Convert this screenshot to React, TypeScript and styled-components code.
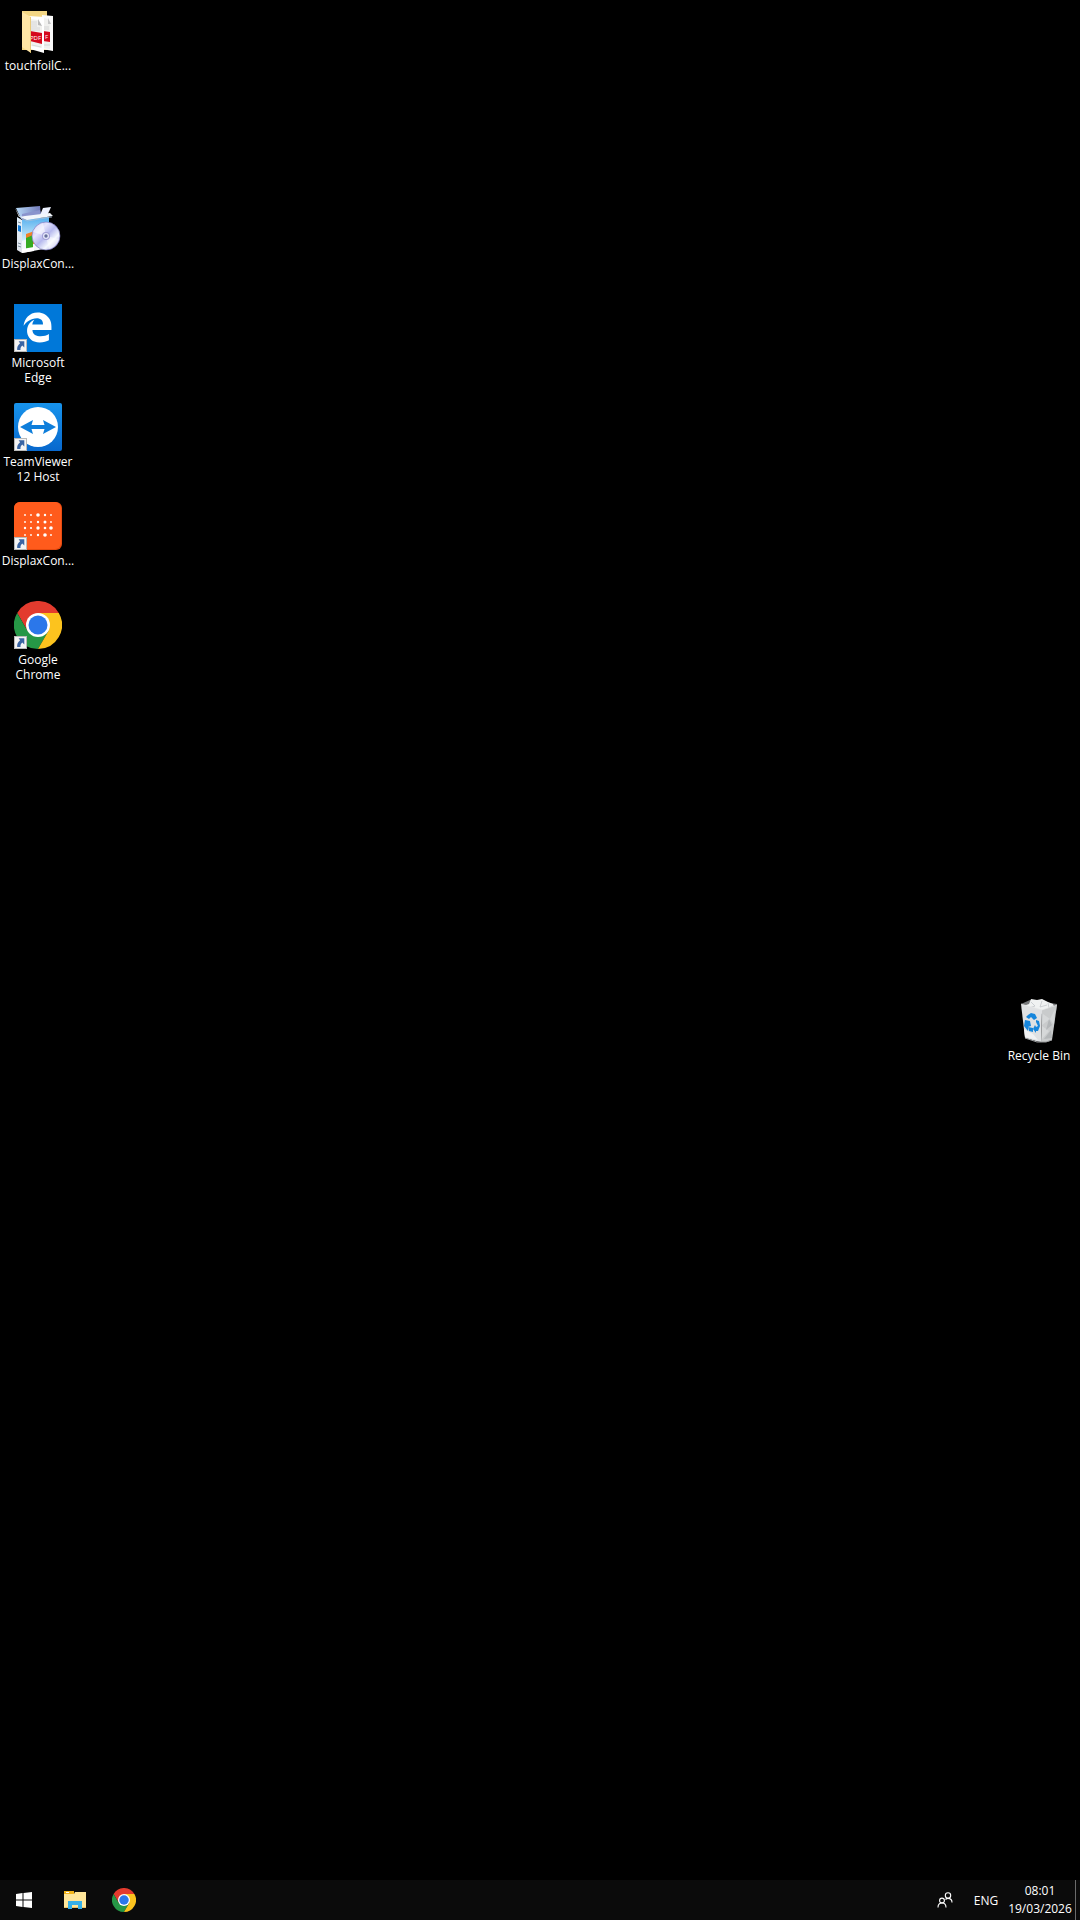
import React from "react"
import { FaEdgeLegacy } from "react-icons/fa"
import styled, { createGlobalStyle } from "styled-components"

const GlobalStyle = createGlobalStyle`
  body {
    margin: 0;
    background: #000;
    color: #fff;
    font-family: "Open Sans", "Noto Sans", sans-serif;
    font-size: 12px;
  }

  button {
    border: 0;
    padding: 0;
    background: none;
    color: inherit;
    font: inherit;
  }
`

const ShortcutArrow: React.FC = () => (
  <g>
    <rect x="0.5" y="35.5" width="12" height="12" fill="#f4f4f4" stroke="#b9b9b9" />
    <path d="M4.600 37.200h5.700v6.200l-2-1.900c-1.500 1.200-2 2.600-1.800 4.500H3.200c-.3-2.800.6-5 2.900-6.800z" fill="#3a64a3" />
  </g>
)

const PdfFolderIcon: React.FC = () => (
  <svg width="48" height="48" viewBox="0 0 48 48" fontSize="6" aria-hidden="true">
    <path d="M8 4h25v39H8z" fill="#f3d684" />
    <path d="M28 8l11 1v35l-11-2z" fill="#fafafa" />
    <path d="M30 11l4 1 2 5v25l-6-1z" fill="#f0f0ee" />
    <path d="M34 11l3 6h-3z" fill="#c4c4c4" />
    <path d="M30 20h5M30 22h5M30 38h6" stroke="#cfcfcf" strokeWidth="0.8" />
    <path d="M29 24l7 1v10l-7-1z" fill="#d5081d" />
    <text x="31" y="32" fill="#fff">
      F
    </text>
    <path d="M15 9l15 1v36l-14-4z" fill="#fff" />
    <path d="M16 12l8 1 4 6v22l-11-2z" fill="#f1f1ee" />
    <path d="M24 12l4 7-4-1z" fill="#b9b9b9" />
    <path d="M17 15h6M17 17h6M17 19h6M17 21h9M17 23h9M18 38l9 2" stroke="#d3d3d3" strokeWidth="0.8" />
    <path d="M16 24l12 2v11l-12-3z" fill="#d5081d" />
    <text x="16" y="33" fill="#fff">
      PDF
    </text>
    <path d="M8 5l9 5v36l-9-6z" fill="#ffe6a6" />
    <path d="M16.500 10v36" stroke="#dcb95e" strokeWidth="0.6" />
  </svg>
)

const InstallerIcon: React.FC = () => (
  <svg width="48" height="48" viewBox="0 0 48 48" aria-hidden="true">
    <defs>
      <linearGradient id="boxSide" x1="0" y1="0" x2="0" y2="1">
        <stop offset="0" stopColor="#e3f1fb" />
        <stop offset="1" stopColor="#dfe3ea" />
      </linearGradient>
      <linearGradient id="boxFront" x1="0" y1="0" x2="0" y2="1">
        <stop offset="0" stopColor="#52aeee" />
        <stop offset="1" stopColor="#d6f1fc" />
      </linearGradient>
      <linearGradient id="flap" x1="0" y1="0" x2="1" y2="0">
        <stop offset="0" stopColor="#b7daf8" />
        <stop offset="1" stopColor="#7078b8" />
      </linearGradient>
      <linearGradient id="disc" x1="0" y1="0" x2="1" y2="1">
        <stop offset="0" stopColor="#a9a6ea" />
        <stop offset="0.3" stopColor="#e6e5fd" />
        <stop offset="0.5" stopColor="#b6b9ee" />
        <stop offset="0.7" stopColor="#f4f8ff" />
        <stop offset="1" stopColor="#7a77d6" />
      </linearGradient>
    </defs>
    <path d="M2 3l24-2 1 10-20 3z" fill="url(#flap)" />
    <path d="M8 9l18-4 1 7-19 3z" fill="#8a94cd" />
    <path d="M26 10l3-7 8-1-4 9z" fill="#eef2ff" />
    <path d="M3 12l5 3v33l-5-3z" fill="url(#boxSide)" />
    <path d="M8 15l27-3v31L8 48z" fill="#f3f7fb" />
    <path d="M8 15l27-3v14L8 36z" fill="url(#boxFront)" />
    <path d="M12 29l14-5v14l-14 2z" fill="#f18128" />
    <path d="M12 33l7-3v14l-7 1z" fill="#35ab21" />
    <path d="M8 44l12-2v4L8 48z" fill="#fff" />
    <path d="M1 3l5 9 7 3 26-4-3-3-25 3-6 1z" fill="#f2f6fb" />
    <path d="M7 13l6 3 25-4" fill="none" stroke="#aebfd6" strokeWidth="0.7" />
    <path d="M4 20l3 1v6l-3-1z" fill="#1378d4" />
    <path d="M4 38l3 1M4 41l3 1M4 17l3 1" stroke="#7f8f9f" />
    <circle cx="32" cy="31" r="14" fill="url(#disc)" stroke="#7773bd" strokeWidth="0.6" />
    <path d="M32 31L19 27c2-5 6-8 10-9z" fill="#fff" opacity="0.5" />
    <path d="M32 31l13 3c-2 6-6 9-10 10z" fill="#fff" opacity="0.5" />
    <circle cx="32" cy="31" r="4" fill="#a39fd6" />
    <circle cx="32" cy="31" r="3" fill="#e6e8fa" />
    <circle cx="32" cy="31" r="1.700" fill="#68709c" />
  </svg>
)

const EdgeIcon: React.FC = () => (
  <svg width="48" height="48" viewBox="0 0 48 48" aria-hidden="true">
    <path d="M0 0h48v48H0z" fill="#0078d9" />
    <FaEdgeLegacy x="8" y="8" size="31" color="#fff" />
    <ShortcutArrow />
  </svg>
)

const TeamViewerIcon: React.FC = () => (
  <svg width="48" height="48" viewBox="0 0 48 48" aria-hidden="true">
    <defs>
      <linearGradient id="teamBlue" x1="0" y1="0" x2="0" y2="1">
        <stop offset="0" stopColor="#1793ec" />
        <stop offset="1" stopColor="#0868cd" />
      </linearGradient>
    </defs>
    <rect width="48" height="48" rx="2" fill="url(#teamBlue)" />
    <circle cx="24" cy="24" r="20" fill="#fff" />
    <path d="M6 24l13-7-1.500 5h13L29 17l13 7-13 7 1.500-5h-13l1.500 5z" fill="#0e7edb" />
    <ShortcutArrow />
  </svg>
)

const dotColumns = [11, 17, 24, 31, 37]
const dotRows = [
  { y: 13, sizes: [0.9, 0.9, 1.8, 1.2, 0.9] },
  { y: 20, sizes: [0.9, 0.9, 1.2, 1.5, 0.9] },
  { y: 26, sizes: [1.2, 1.1, 1.7, 1.3, 1.8] },
  { y: 33, sizes: [0.9, 0.9, 1.2, 1.8, 0.9] },
]

const DisplaxIcon: React.FC = () => (
  <svg width="48" height="48" viewBox="0 0 48 48" aria-hidden="true">
    <rect width="48" height="48" rx="6" fill="#e64b11" />
    <rect width="47" height="47" rx="6" fill="#ff5b1c" />
    {dotRows.map((row) =>
      row.sizes.map((size, i) => <circle key={`${row.y}-${i}`} cx={dotColumns[i]} cy={row.y} r={size} fill="#fff" />)
    )}
    <ShortcutArrow />
  </svg>
)

const ChromeIcon: React.FC<{ size: number; shortcut?: boolean }> = ({ size, shortcut }) => (
  <svg width={size} height={size} viewBox="0 0 48 48" aria-hidden="true">
    <path d="M24 12h20.800A24 24 0 0 0 3.200 12l10.400 18z" fill="#e33b2e" />
    <path d="M13.600 30L3.200 12A24 24 0 0 0 24 48l10.400-18z" fill="#269746" />
    <path d="M34.400 30L24 48A24 24 0 0 0 44.800 12H24z" fill="#fcc31e" />
    <circle cx="24" cy="24" r="12" fill="#fff" />
    <circle cx="24" cy="24" r="9.500" fill="#2b77ea" />
    {shortcut && <ShortcutArrow />}
  </svg>
)

const RecycleBinIcon: React.FC = () => (
  <svg width="48" height="48" viewBox="0 0 48 48" aria-hidden="true">
    <path d="M6 7l9-4 27 4-1 7-22 2z" fill="#77797b" />
    <path d="M8 9l6-2 2-5 6 1 5-1 6 3 5 2 2 5-12 5-18-4z" fill="#f0f2f2" />
    <path d="M16 5l4 4-6 2M27 4l-2 6 7-2M33 6l1 5 4-2" fill="none" stroke="#c3c7ca" strokeWidth="0.8" />
    <path d="M6 7l21 6-1 32-5-1-11-3z" fill="#dfe1e3" />
    <path d="M27 13l15-5-5 35-5 2h-6z" fill="#c9cbcc" />
    <path d="M6 7l21 6 15-5" fill="none" stroke="#e4e5e6" strokeWidth="0.6" />
    <path d="M28 17l7 5-8 6zM40 12l-5 10 4 6zM27 29l7 5-7 8z" fill="#d6d8d9" />
    <path d="M34 22l3 6-6 5zM36 33l-7 9 8-1z" fill="#b4b7b9" />
    <path d="M9 32l1 8 13 3-5-6z" fill="#f1f2f3" />
    <path d="M10 41l12 4h9l6-2" fill="none" stroke="#97999b" />
    <path d="M13 18l3-2 4 1 2 4-3 2-3-3-2 2-3-2z" fill="#1686dc" />
    <path d="M10 23l5 1 1 5-3 1v4l-4-5z" fill="#1686dc" />
    <path d="M13 30l5 1v4l-4-1z" fill="#1686dc" />
    <path d="M21 23l3 1 1 5-2 5h-2v2l-3-4 2-4 1 2 2-1-2-4z" fill="#1686dc" />
  </svg>
)

const WindowsIcon: React.FC = () => (
  <svg width="16" height="16" viewBox="0 0 16 16" aria-hidden="true">
    <path d="M0 2l6.500-1v6.500H0zM7.500 0.900L16 0v7.500H7.500zM0 8.500h6.500V15L0 14zM7.500 8.500H16V16l-8.500-1z" fill="#fff" />
  </svg>
)

const ExplorerIcon: React.FC = () => (
  <svg width="24" height="24" viewBox="0 0 24 24" aria-hidden="true">
    <path d="M2 3h10v3H2z" fill="#f3b51b" />
    <path d="M4 4h3v1H4z" fill="#fff" />
    <path d="M2 6h10l1-2h11v16H2z" fill="#ffe69a" />
    <path d="M2 19h22v1H2z" fill="#ebc365" />
    <path d="M6 13h14v8h-4v-4h-6v4H6z" fill="#36b0e8" />
  </svg>
)

const PeopleIcon: React.FC = () => (
  <svg width="16" height="16" viewBox="0 0 16 16" fill="none" stroke="#fff" strokeWidth="1.100" aria-hidden="true">
    <circle cx="5" cy="8.500" r="2.400" />
    <path d="M1 15.500c0-3 1.700-4.500 4-4.500s4 1.500 4 4.500" />
    <circle cx="11" cy="3.500" r="2.700" />
    <path d="M8.500 7.500c.7-.7 1.500-1.100 2.500-1.100 2.400 0 4 1.600 4 4.100" />
  </svg>
)

interface Shortcut {
  label: string
  row: number
  column?: number
  icon: React.ReactNode
}

const shortcuts: Shortcut[] = [
  { label: "touchfoilC...", row: 1, icon: <PdfFolderIcon /> },
  { label: "DisplaxCon...", row: 3, icon: <InstallerIcon /> },
  { label: "Microsoft Edge", row: 4, icon: <EdgeIcon /> },
  { label: "TeamViewer 12 Host", row: 5, icon: <TeamViewerIcon /> },
  { label: "DisplaxCon...", row: 6, icon: <DisplaxIcon /> },
  { label: "Google Chrome", row: 7, icon: <ChromeIcon size={48} shortcut /> },
  { label: "Recycle Bin", row: 11, column: 3, icon: <RecycleBinIcon /> },
]

const App: React.FC = () => (
  <Screen>
    <GlobalStyle />
    <Desktop>
      {shortcuts.map((item) => (
        <DesktopItem key={item.row} $row={item.row} $column={item.column || 1}>
          {item.icon}
          <Label>{item.label}</Label>
        </DesktopItem>
      ))}
    </Desktop>
    <Taskbar>
      <TaskButton aria-label="Start">
        <WindowsIcon />
      </TaskButton>
      <TaskButton aria-label="File Explorer">
        <ExplorerIcon />
      </TaskButton>
      <TaskButton aria-label="Google Chrome">
        <ChromeIcon size={24} />
      </TaskButton>
      <Tray>
        <TrayButton $width={44} aria-label="People">
          <PeopleIcon />
        </TrayButton>
        <TrayButton $width={38}>ENG</TrayButton>
        <Clock>
          <span>08:01</span>
          <span>19/03/2026</span>
        </Clock>
        <ShowDesktop aria-label="Show desktop" />
      </Tray>
    </Taskbar>
  </Screen>
)

export default App

const Screen = styled.div`
  display: flex;
  flex-direction: column;
  min-height: 100vh;
`

const Desktop = styled.main`
  display: grid;
  flex: 1;
  grid-template-columns: 76px 1fr 76px;
  grid-auto-rows: 99px;
  padding-right: 3px;
`

const DesktopItem = styled.button<{ $row: number; $column: number }>`
  display: flex;
  flex-direction: column;
  align-items: center;
  justify-content: flex-start;
  grid-row: ${(props) => props.$row};
  grid-column: ${(props) => props.$column};
  gap: 3px;
  padding-top: 7px;
`

const Label = styled.span`
  line-height: 15px;
  text-align: center;
`

const Taskbar = styled.footer`
  display: flex;
  gap: 2px;
  height: 40px;
  background: #0b0b0b;
`

const TaskButton = styled.button`
  display: flex;
  align-items: center;
  justify-content: center;
  width: 48px;
`

const Tray = styled.div`
  display: flex;
  margin-left: auto;
`

const TrayButton = styled.button<{ $width: number }>`
  display: flex;
  align-items: center;
  justify-content: center;
  width: ${(props) => props.$width}px;
`

const Clock = styled.button`
  display: flex;
  flex-direction: column;
  align-items: center;
  justify-content: center;
  width: 70px;
  line-height: 18px;
`

const ShowDesktop = styled.button`
  width: 5px;
  border-left: 1px solid #6b6b6b;
`
